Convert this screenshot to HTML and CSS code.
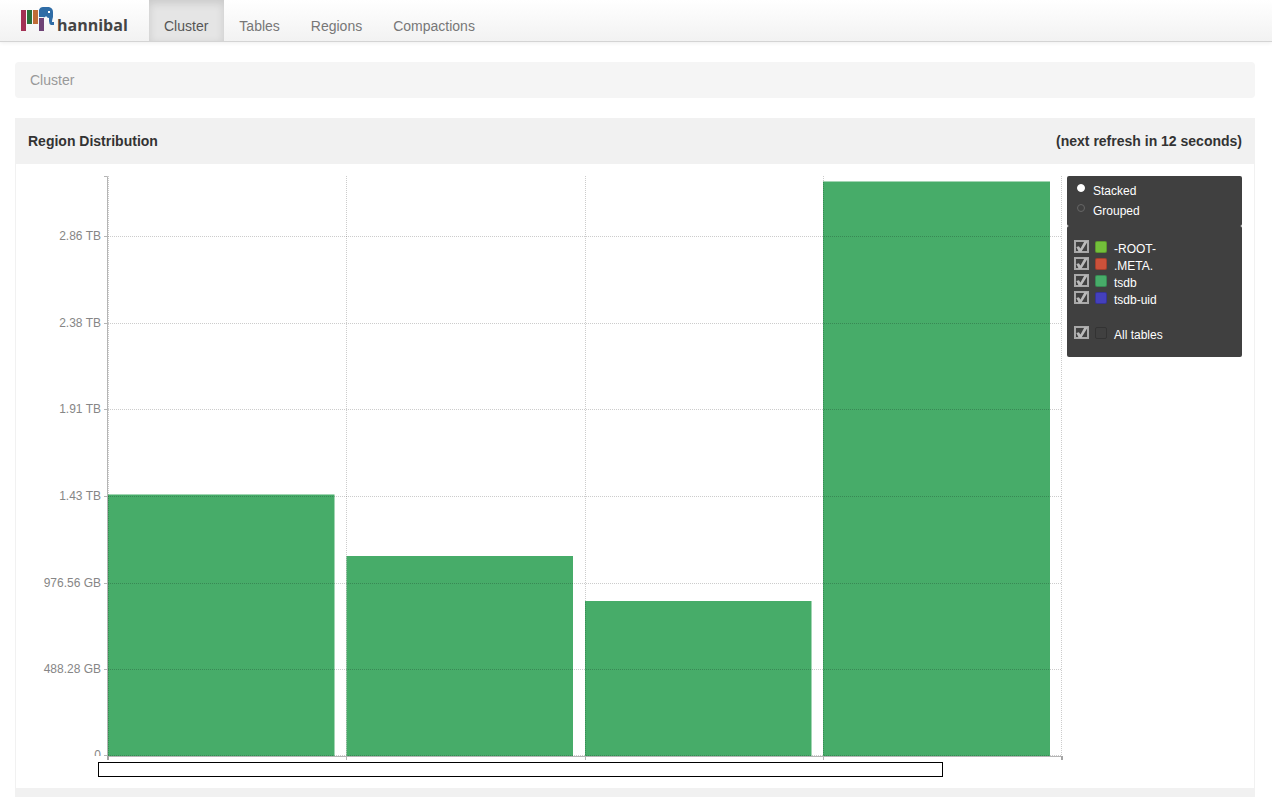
FILE: index.html
```html
<!DOCTYPE html>
<html lang="en">
<head>
<meta charset="utf-8">
<meta name="viewport" content="width=device-width, initial-scale=1">
<title>hannibal</title>
<link rel="stylesheet" href="styles.css">
</head>
<body>
<header class="navbar">
  <a class="brand" href="#">
    <svg class="brand-mark" viewBox="0 0 33 25" aria-hidden="true">
      <path fill="#a33054" d="M0 3h5v21H0z"/>
      <path fill="#2b703c" d="M6 3h5v14H6z"/>
      <path fill="#bf6c36" d="M12 3h5v14h-5z"/>
      <path fill="#6e4376" d="M18 11h5v13h-5z"/>
      <path fill="#2f6ca6" d="M18 10V3q1-3 4-3h6q4 1 4 5v5q-1 3-1 5h2v3h-3q-2-1-2-4v-3q-2 0-3-2-1 2-3 1z"/>
      <path fill="#fff" d="M27 4h2v2h-2z"/>
    </svg>
    <span class="brand-name">hannibal</span>
  </a>
  <nav class="nav">
    <a class="nav-link active" href="#">Cluster</a>
    <a class="nav-link" href="#">Tables</a>
    <a class="nav-link" href="#">Regions</a>
    <a class="nav-link" href="#">Compactions</a>
  </nav>
</header>
<main class="page">
  <div class="breadcrumb">Cluster</div>
  <section class="panel">
    <div class="panel-head">
      <h1 class="panel-title">Region Distribution</h1>
      <span class="panel-title">(next refresh in 12 seconds)</span>
    </div>
    <div class="panel-body">
      <div class="chart">
        <svg class="plot" viewBox="0 0 1035 586" role="img" aria-label="Region distribution">
          <g class="bars">
            <path d="M80 318.500h226.500V580H80zM318.500 380H545v200H318.500zM557 425h226.500v155H557zM795 5.500h227V580H795z"/>
          </g>
          <path class="grid" d="M80 60.500h954M80 147.500h954M80 233.500h954M80 320.500h954M80 407.500h954M80 493.500h954M80 579.500h954M80.500 0v580M318.500 0v580M557.500 0v580M795.500 0v580M1033.500 0v580"/>
          <path class="axis" d="M76 .5h3.500v580H1034M76 60.500h4M76 147.500h4M76 233.500h4M76 320.500h4M76 407.500h4M76 493.500h4M76 579.500h4M318.500 580v4M557.500 580v4M795.500 580v4"/>
          <path class="axis-end" d="M80 580v4M1034 580v4"/>
          <g class="labels">
            <text x="73" y="64">2.86 TB</text>
            <text x="73" y="151">2.38 TB</text>
            <text x="73" y="237">1.91 TB</text>
            <text x="73" y="324">1.43 TB</text>
            <text x="73" y="411">976.56 GB</text>
            <text x="73" y="497">488.28 GB</text>
          </g>
          <svg x="60" y="574" width="16" height="6" class="labels zero"><text x="13" y="9">0</text></svg>
        </svg>
        <div class="range"></div>
      </div>
      <form class="legend">
        <div class="modes">
          <label class="mode"><input class="radio" type="radio" name="mode" checked><span>Stacked</span></label>
          <label class="mode"><input class="radio" type="radio" name="mode"><span>Grouped</span></label>
        </div>
        <div class="series">
          <label class="item"><input class="check" type="checkbox" checked><i class="swatch root"></i><span>-ROOT-</span></label>
          <label class="item"><input class="check" type="checkbox" checked><i class="swatch meta"></i><span>.META.</span></label>
          <label class="item"><input class="check" type="checkbox" checked><i class="swatch tsdb"></i><span>tsdb</span></label>
          <label class="item"><input class="check" type="checkbox" checked><i class="swatch uid"></i><span>tsdb-uid</span></label>
          <label class="item all"><input class="check" type="checkbox" checked><i class="swatch"></i><span>All tables</span></label>
        </div>
      </form>
    </div>
    <div class="panel-foot"></div>
  </section>
</main>
</body>
</html>
```
FILE: styles.css
```css
* { box-sizing: border-box; }
body {
  margin: 0;
  background: #fff;
  color: #333;
  font: 14px/20px "Liberation Sans", Arial, sans-serif;
}
.navbar {
  display: flex;
  height: 42px;
  padding-left: 21px;
  border-bottom: 1px solid #d4d4d4;
  background: linear-gradient(#fff, #f2f2f2);
  box-shadow: 0 1px 4px rgba(0, 0, 0, .07);
}
.brand {
  display: flex;
  width: 128px;
  gap: 3px;
  color: #444;
  text-decoration: none;
}
.brand-mark { width: 33px; height: 25px; margin-top: 7px; }
.brand-name {
  padding-top: 15px;
  font: bold 16px/20px "Open Sans", "Noto Sans", sans-serif;
}
.nav { display: flex; }
.nav-link {
  padding: 16px 16px 5px 15px;
  color: #777;
  text-decoration: none;
}
.nav-link.active {
  background: #e5e5e5;
  box-shadow: inset 0 3px 8px rgba(0, 0, 0, .125);
  color: #555;
}
.page { padding: 20px 17px 0 15px; }
.breadcrumb {
  margin-bottom: 20px;
  padding: 8px 15px;
  border-radius: 4px;
  background: #f5f5f5;
  color: #999;
}
.panel { border: 1px solid #f1f1f1; border-width: 0 1px; }
.panel-head {
  display: flex;
  justify-content: space-between;
  padding: 13px 12px;
  background: #f1f1f1;
}
.panel-title { margin: 0; font-size: 14px; line-height: 20px; font-weight: bold; }
.panel-body {
  display: flex;
  align-items: flex-start;
  gap: 4px;
  padding: 12px 12px 11px;
}
.chart { flex: 1; min-width: 0; }
.plot { display: block; width: 100%; height: auto; }
.bars { fill: #47ac69; }
.grid { fill: none; stroke: rgba(0, 0, 0, .2); stroke-dasharray: 1 1; }
.axis { fill: none; stroke: #b5b5b5; }
.axis-end { stroke: #a5a5a5; stroke-width: 2; }
.labels { fill: #868686; font-size: 12px; text-anchor: end; }
.range {
  width: 81.6%;
  height: 15px;
  margin-left: 70px;
  border: 1px solid #000;
}
.legend {
  width: 175px;
  color: #fff;
  font-size: 12px;
}
.modes, .series { border-radius: 2px; background: #404040; }
.modes { padding: 5px 10px; }
.series { padding: 14px 7px; }
.mode, .item { display: flex; }
.mode { gap: 8px; line-height: 20px; }
.radio {
  appearance: none;
  width: 8px;
  height: 8px;
  margin: 3px 0 0;
  border: 1px solid #666;
  border-radius: 50%;
}
.radio:checked { border-color: #fff; background: #fff; }
.item { line-height: 17px; }
.item.all { margin-top: 18px; }
.check {
  position: relative;
  appearance: none;
  width: 15px;
  height: 13px;
  margin: 0 6px 0 0;
  border: 2px solid #a9a9a9;
}
.check:checked::after {
  content: "";
  position: absolute;
  inset: -1px;
  background: #bababa;
  clip-path: polygon(10% 55%, 30% 48%, 42% 68%, 72% 5%, 100% 0, 48% 100%, 30% 100%);
}
.swatch {
  width: 12px;
  height: 12px;
  margin: 1px 7px 0 0;
  border: 1px solid rgba(0, 0, 0, .2);
  border-radius: 2px;
}
.item span { padding-top: 1px; line-height: 16px; }
.root { background: #73c03a; }
.meta { background: #cb513a; }
.tsdb { background: #47ac69; }
.uid { background: #4440bd; }
.panel-foot { height: 9px; background: #f1f1f1; }
```
